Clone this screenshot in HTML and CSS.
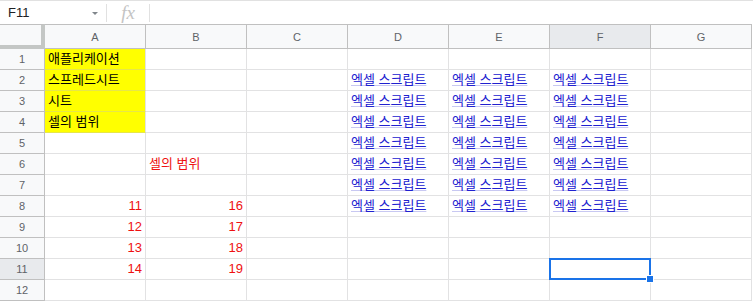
FILE: index.html
```html
<!DOCTYPE html>
<html lang="ko">
<head>
    <meta charset="UTF-8">
    <title>시트</title>
    <link rel="stylesheet" href="styles.css">
</head>
<body>

<!-- Barra della formula -->
<div class="formula-bar">
    <div class="name-box">F11</div>
    <span class="name-arrow"></span>
    <span class="bar-sep"></span>
    <span class="fx">fx</span>
    <span class="bar-sep"></span>
</div>

<div class="sheet">
    <div class="corner"></div>
    <div class="col-head">A</div>
    <div class="col-head">B</div>
    <div class="col-head">C</div>
    <div class="col-head">D</div>
    <div class="col-head">E</div>
    <div class="col-head active">F</div>
    <div class="col-head">G</div>

    <div class="row-head">1</div>
    <div class="cell hl">애플리케이션</div>
    <div class="cell"></div><div class="cell"></div><div class="cell"></div><div class="cell"></div><div class="cell"></div><div class="cell"></div>

    <div class="row-head">2</div>
    <div class="cell hl">스프레드시트</div>
    <div class="cell"></div><div class="cell"></div>
    <div class="cell link">엑셀 스크립트</div>
    <div class="cell link">엑셀 스크립트</div>
    <div class="cell link">엑셀 스크립트</div>
    <div class="cell"></div>

    <div class="row-head">3</div>
    <div class="cell hl">시트</div>
    <div class="cell"></div><div class="cell"></div>
    <div class="cell link">엑셀 스크립트</div>
    <div class="cell link">엑셀 스크립트</div>
    <div class="cell link">엑셀 스크립트</div>
    <div class="cell"></div>

    <div class="row-head">4</div>
    <div class="cell hl">셀의 범위</div>
    <div class="cell"></div><div class="cell"></div>
    <div class="cell link">엑셀 스크립트</div>
    <div class="cell link">엑셀 스크립트</div>
    <div class="cell link">엑셀 스크립트</div>
    <div class="cell"></div>

    <div class="row-head">5</div>
    <div class="cell"></div><div class="cell"></div><div class="cell"></div>
    <div class="cell link">엑셀 스크립트</div>
    <div class="cell link">엑셀 스크립트</div>
    <div class="cell link">엑셀 스크립트</div>
    <div class="cell"></div>

    <div class="row-head">6</div>
    <div class="cell"></div>
    <div class="cell red">셀의 범위</div>
    <div class="cell"></div>
    <div class="cell link">엑셀 스크립트</div>
    <div class="cell link">엑셀 스크립트</div>
    <div class="cell link">엑셀 스크립트</div>
    <div class="cell"></div>

    <div class="row-head">7</div>
    <div class="cell"></div><div class="cell"></div><div class="cell"></div>
    <div class="cell link">엑셀 스크립트</div>
    <div class="cell link">엑셀 스크립트</div>
    <div class="cell link">엑셀 스크립트</div>
    <div class="cell"></div>

    <div class="row-head">8</div>
    <div class="cell num">11</div>
    <div class="cell num">16</div>
    <div class="cell"></div>
    <div class="cell link">엑셀 스크립트</div>
    <div class="cell link">엑셀 스크립트</div>
    <div class="cell link">엑셀 스크립트</div>
    <div class="cell"></div>

    <div class="row-head">9</div>
    <div class="cell num">12</div>
    <div class="cell num">17</div>
    <div class="cell"></div><div class="cell"></div><div class="cell"></div><div class="cell"></div><div class="cell"></div>

    <div class="row-head">10</div>
    <div class="cell num">13</div>
    <div class="cell num">18</div>
    <div class="cell"></div><div class="cell"></div><div class="cell"></div><div class="cell"></div><div class="cell"></div>

    <div class="row-head active">11</div>
    <div class="cell num">14</div>
    <div class="cell num">19</div>
    <div class="cell"></div><div class="cell"></div><div class="cell"></div>
    <div class="cell selected"></div>
    <div class="cell"></div>

    <div class="row-head">12</div>
    <div class="cell"></div><div class="cell"></div><div class="cell"></div><div class="cell"></div><div class="cell"></div><div class="cell"></div><div class="cell"></div>
</div>

</body>
</html>
```

FILE: styles.css
```css
/* Stili generali */
body {
    margin: 0;
    font-family: 'Liberation Sans', Arial, 'Noto Sans CJK KR', sans-serif;
    background-color: #fff;
    color: #000;
}

/* Barra della formula */
.formula-bar {
    display: flex;
    align-items: center;
    height: 24px;
    box-sizing: border-box;
    border-top: 1px solid #e1e1e1;
}

.name-box {
    width: 80px;
    padding-left: 8px;
    font-size: 13px;
    color: #202124;
}

.name-arrow {
    width: 0;
    height: 0;
    margin: 1px 8px 0 4px;
    border-left: 3px solid transparent;
    border-right: 3px solid transparent;
    border-top: 3px solid #80868b;
}

.bar-sep {
    width: 1px;
    height: 18px;
    background-color: #e1e1e1;
}

.fx {
    width: 42px;
    text-align: center;
    font-family: 'Liberation Serif', serif;
    font-style: italic;
    font-size: 19px;
    color: #c4c4c4;
    line-height: 22px;
}

/* Griglia */
.sheet {
    display: grid;
    grid-template-columns: 45px repeat(7, 101px);
    grid-template-rows: 25px repeat(12, 21px);
}

.corner,
.col-head,
.row-head,
.cell {
    box-sizing: border-box;
}

.corner {
    background-color: #f8f9fa;
    border-top: 1px solid #c0c0c0;
    border-right: 4px solid #c4c7c5;
    border-bottom: 4px solid #c4c7c5;
}

.col-head {
    display: flex;
    align-items: center;
    justify-content: center;
    background-color: #f8f9fa;
    border-top: 1px solid #c0c0c0;
    border-right: 1px solid #c0c0c0;
    border-bottom: 1px solid #c0c0c0;
    font-size: 11px;
    color: #5f6368;
}

.col-head.active,
.row-head.active {
    background-color: #e8eaed;
}

.row-head {
    display: flex;
    align-items: center;
    justify-content: center;
    background-color: #f8f9fa;
    border-right: 1px solid #c0c0c0;
    border-bottom: 1px solid #c0c0c0;
    font-size: 11px;
    color: #5f6368;
}

.cell {
    position: relative;
    display: flex;
    align-items: flex-end;
    padding: 0 3px 3px 3px;
    border-right: 1px solid #e2e2e3;
    border-bottom: 1px solid #e2e2e3;
    font-size: 13px;
    line-height: 15px;
    white-space: nowrap;
}

.cell.hl {
    background-color: #ffff00;
    border-bottom-color: #e6e64a;
}

.cell.red {
    color: #ee1111;
}

.cell.num {
    justify-content: flex-end;
    color: #ee1111;
}

.cell.link {
    color: #2020d0;
    text-decoration: underline;
    text-decoration-color: #c8c8f2;
}

/* Cella selezionata */
.cell.selected::after {
    content: "";
    position: absolute;
    top: -1px;
    left: -1px;
    right: -1px;
    bottom: -1px;
    border: 2px solid #1a73e8;
}

.cell.selected::before {
    content: "";
    position: absolute;
    right: -4px;
    bottom: -4px;
    width: 6px;
    height: 6px;
    background-color: #1a73e8;
    border: 1px solid #fff;
    z-index: 1;
}
```
